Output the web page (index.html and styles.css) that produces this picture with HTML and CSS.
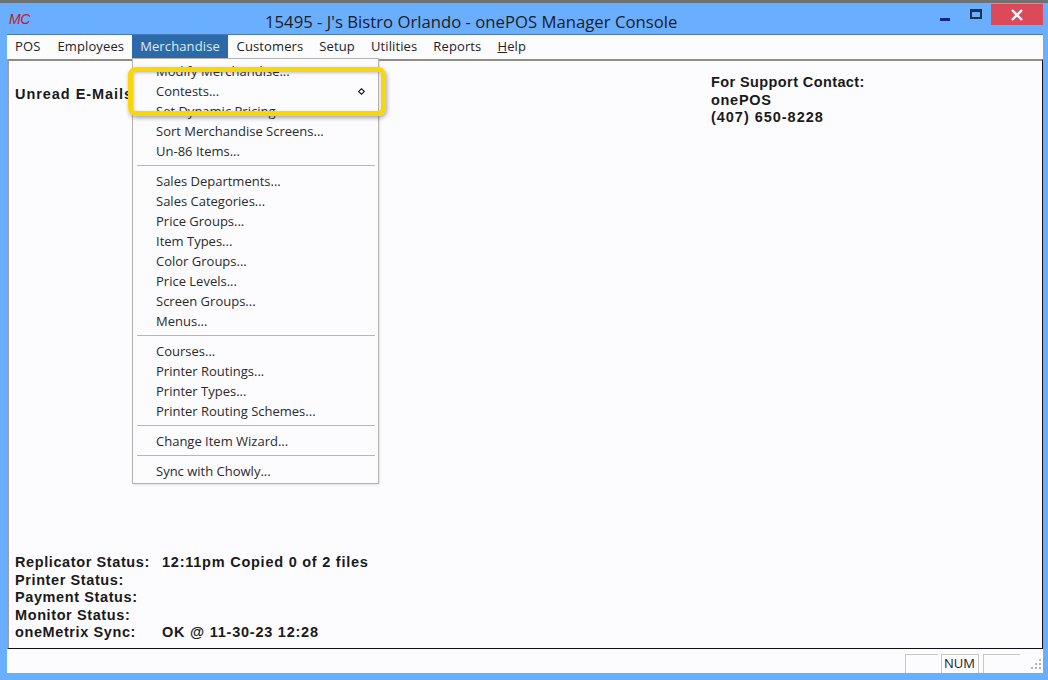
FILE: index.html
```html
<!DOCTYPE html>
<html lang="en">
<head>
<meta charset="utf-8">
<title>onePOS Manager Console</title>
<link rel="stylesheet" href="styles.css">
</head>
<body>
<div class="window">
  <header class="titlebar">
    <span class="logo">MC</span>
    <h1 class="title">15495 - J's Bistro Orlando - onePOS Manager Console</h1>
    <div class="controls">
      <span class="minimize"></span>
      <span class="maximize"></span>
      <span class="close">
        <svg width="14" height="12" viewBox="0 0 14 12"><path d="M2 1 L12 11 M12 1 L2 11" stroke="#fff" stroke-width="2.4" fill="none"/></svg>
      </span>
    </div>
  </header>
  <nav class="menubar">
    <span class="menu-title">POS</span>
    <span class="menu-title">Employees</span>
    <span class="menu-title active">Merchandise</span>
    <span class="menu-title">Customers</span>
    <span class="menu-title">Setup</span>
    <span class="menu-title">Utilities</span>
    <span class="menu-title">Reports</span>
    <span class="menu-title"><u>H</u>elp</span>
  </nav>
  <main class="client">
    <div class="top-row">
      <div class="emails">Unread E-Mails</div>
      <div class="support">
        <div>For Support Contact:</div>
        <div class="support-name">onePOS</div>
        <div class="support-phone">(407) 650-8228</div>
      </div>
    </div>
    <div class="status">
      <span>Replicator Status:</span><span class="value">12:11pm Copied 0 of 2 files</span>
      <span>Printer Status:</span><span></span>
      <span>Payment Status:</span><span></span>
      <span>Monitor Status:</span><span></span>
      <span>oneMetrix Sync:</span><span class="value">OK @ 11-30-23 12:28</span>
    </div>
  </main>
  <footer class="statusbar">
    <span class="pane pane-a"></span>
    <span class="pane pane-b">NUM</span>
    <span class="pane pane-c"></span>
    <svg class="grip" width="14" height="14" viewBox="0 0 14 14" fill="#b4b4b4">
      <rect x="11" y="2" width="2" height="2"/>
      <rect x="7" y="6" width="2" height="2"/><rect x="11" y="6" width="2" height="2"/>
      <rect x="3" y="10" width="2" height="2"/><rect x="7" y="10" width="2" height="2"/><rect x="11" y="10" width="2" height="2"/>
    </svg>
  </footer>
</div>
<div class="dropdown">
  <div class="item">Modify Merchandise...</div>
  <div class="item">Contests...</div>
  <div class="item">Set Dynamic Pricing...</div>
  <div class="item">Sort Merchandise Screens...</div>
  <div class="item">Un-86 Items...</div>
  <div class="sep"></div>
  <div class="item">Sales Departments...</div>
  <div class="item">Sales Categories...</div>
  <div class="item">Price Groups...</div>
  <div class="item">Item Types...</div>
  <div class="item">Color Groups...</div>
  <div class="item">Price Levels...</div>
  <div class="item">Screen Groups...</div>
  <div class="item">Menus...</div>
  <div class="sep"></div>
  <div class="item">Courses...</div>
  <div class="item">Printer Routings...</div>
  <div class="item">Printer Types...</div>
  <div class="item">Printer Routing Schemes...</div>
  <div class="sep"></div>
  <div class="item">Change Item Wizard...</div>
  <div class="sep"></div>
  <div class="item">Sync with Chowly...</div>
</div>
<div class="highlight"></div>
<span class="cursor"></span>
</body>
</html>
```
FILE: styles.css
```css
* { box-sizing: border-box; }
html, body { margin: 0; padding: 0; }
body {
  width: 1048px;
  height: 680px;
  overflow: hidden;
  position: relative;
  font-family: "Open Sans", "Noto Sans", sans-serif;
  color: #222;
  background: #6aaeff;
}
.window {
  height: 680px;
  display: flex;
  flex-direction: column;
  background: #6aaeff;
  border-top: 3px solid #6f7270;
  padding: 0 4px 7px 7px;
}
.titlebar {
  height: 31px;
  flex: none;
  display: flex;
  align-items: center;
  position: relative;
}
.logo {
  font-family: "Liberation Sans", sans-serif;
  font-style: italic;
  font-size: 14px;
  letter-spacing: -0.5px;
  color: #c8161e;
  margin: 0 0 0 2px;
  width: 16px;
}
.title {
  margin: 0 0 0 240px;
  font-size: 16.72px;
  font-weight: 400;
  color: #1c1c1c;
  white-space: nowrap;
  padding-top: 6px;
}
.controls {
  position: absolute;
  right: 0;
  top: 0;
  display: flex;
  align-items: flex-start;
}
.minimize {
  width: 10px;
  height: 3px;
  background: #0d2a80;
  margin: 15px 20px 0 0;
}
.maximize {
  width: 12px;
  height: 10px;
  border: 2px solid #1c3350;
  border-top-width: 3px;
  margin: 6px 9px 0 0;
}
.close {
  width: 52px;
  height: 21px;
  background: #dc4a5a;
  display: flex;
  align-items: center;
  justify-content: center;
  margin: 1px 1px 0 0;
}
.menubar {
  height: 25px;
  flex: none;
  background: #fcfcff;
  display: flex;
  align-items: stretch;
  font-size: 13px;
  border-top: 1px solid #4a78c0;
  margin-right: 1px;
}
.menu-title {
  padding: 1px 8px 0;
  line-height: 21px;
  white-space: nowrap;
  letter-spacing: 0.12px;
}
.menu-title:first-child { padding-right: 9px; }
.menu-title.active {
  background: #2a6aa8;
  color: #dfeaf5;
  margin-right: 0.7px;
}
.client {
  flex: 1;
  min-height: 0;
  background: #fcfcff;
  border-top: 2px solid #8e8e84;
  border-left: 2px solid #a0a09a;
  border-right: 1px solid #111;
  border-bottom: 1px solid #111;
  margin-right: 1px;
  display: flex;
  flex-direction: column;
  justify-content: space-between;
  font-family: "Liberation Sans", sans-serif;
  font-weight: 700;
  font-size: 14.5px;
  color: #1a1a1a;
  padding: 13px 0 6px 6px;
}
.top-row {
  display: flex;
  align-items: flex-start;
}
.emails {
  width: 696px;
  margin-top: 11px;
  line-height: 18px;
  letter-spacing: 0.95px;
  white-space: nowrap;
}
.support {
  line-height: 17.5px;
  letter-spacing: 0.4px;
}
.support-name { letter-spacing: 0.7px; }
.support-phone { letter-spacing: 0.97px; }
.status {
  display: grid;
  grid-template-columns: 147px 1fr;
  grid-auto-rows: 17.6px;
  line-height: 17.6px;
  letter-spacing: 0.6px;
  white-space: nowrap;
}
.status .value { letter-spacing: 0.76px; }
.statusbar {
  height: 24px;
  flex: none;
  background: #fcfcff;
  display: flex;
  justify-content: flex-end;
  align-items: flex-end;
  font-size: 13px;
  padding-right: 1px;
  margin-right: 1px;
  color: #222;
}
.pane {
  height: 19px;
  border-top: 1px solid #c8c8c0;
  border-left: 1px solid #c8c8c0;
  display: block;
}
.pane-a { width: 33px; margin-right: 3px; }
.pane-b { width: 38px; margin-right: 4px; padding-left: 2px; line-height: 17px; border-right: 1px solid #c8c8c0; }
.pane-c { width: 37px; margin-right: 8px; }
.grip { margin-bottom: 2px; }
.dropdown {
  position: absolute;
  left: 132px;
  top: 58px;
  width: 247px;
  height: 426px;
  background: #fcfcff;
  border: 1px solid #b4b4ae;
  padding: 2px 3px;
  font-size: 13px;
  color: #2a2a2a;
  box-shadow: 1px 1px 2px rgba(120,120,120,.2);
}
.item {
  height: 20px;
  line-height: 20px;
  padding-left: 20px;
  white-space: nowrap;
}
.sep {
  height: 1px;
  margin: 4px 0 5px 1px;
  background: #b8b8b2;
}
.highlight {
  position: absolute;
  left: 128px;
  top: 67px;
  width: 258px;
  height: 49px;
  border: 5px solid #f8d60c;
  border-radius: 8px;
  box-shadow: 1px 2px 4px rgba(60,60,60,.45), inset 1px 1px 3px rgba(60,60,60,.3);
}
.cursor {
  position: absolute;
  left: 359px;
  top: 89px;
  width: 5px;
  height: 5px;
  border: 1.5px solid #000;
  transform: rotate(45deg);
  background: #fff;
}
```
